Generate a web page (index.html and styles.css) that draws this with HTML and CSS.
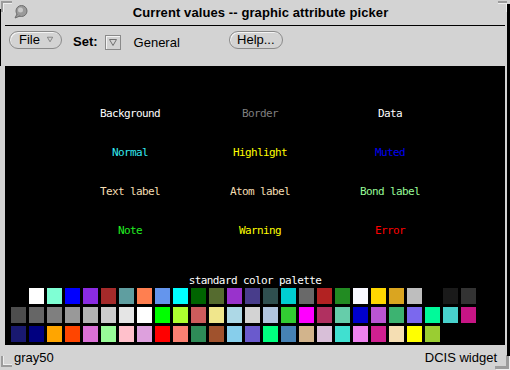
FILE: index.html
```html
<!DOCTYPE html>
<html lang="en">
<head>
  <meta charset="UTF-8">
  <title>Current values -- graphic attribute picker</title>
  <link rel="stylesheet" href="styles.css">
</head>
<body>
  <div class="window">
    <span class="corner corner-tl"></span>
    <span class="corner corner-tr"></span>
    <span class="corner corner-bl"></span>
    <span class="corner corner-br"></span>
    <span class="edge-left"></span>
    <span class="edge-right"></span>

    <div class="titlebar">
      <svg class="title-icon" width="14" height="14" viewBox="0 0 14 14">
        <circle cx="7.5" cy="6" r="5.5" fill="#9a9a9a" stroke="#6e6e6e"/>
        <circle cx="6.5" cy="5" r="2.5" fill="#c8c8c8"/>
        <path d="M3 9 L1 13 L6 11" fill="#9a9a9a" stroke="#6e6e6e"/>
      </svg>
      <h1 class="title">Current values -- graphic attribute picker</h1>
    </div>

    <div class="toolbar">
      <button type="button" class="pill file-btn">File
        <svg class="tri" width="8" height="7" viewBox="0 0 8 7"><path d="M0.5 0.5 H7.5 L4 6.5 Z" fill="none" stroke="#707070"/></svg>
      </button>
      <span class="set-label">Set:</span>
      <span class="menu-box">
        <svg class="tri" width="8" height="7" viewBox="0 0 8 7"><path d="M0.5 0.5 H7.5 L4 6.5 Z" fill="none" stroke="#707070"/></svg>
      </span>
      <span class="set-value">General</span>
      <button type="button" class="pill help-btn">Help...</button>
    </div>

    <div class="canvas">
      <div class="labels">
        <span class="c-white">Background</span>
        <span class="c-gray">Border</span>
        <span class="c-white">Data</span>
        <span class="c-cyan">Normal</span>
        <span class="c-yellow">Highlight</span>
        <span class="c-blue">Muted</span>
        <span class="c-wheat">Text label</span>
        <span class="c-wheat">Atom label</span>
        <span class="c-palegreen">Bond label</span>
        <span class="c-green">Note</span>
        <span class="c-yellow">Warning</span>
        <span class="c-red">Error</span>
      </div>
      <div class="palette-title">standard color palette</div>
      <div class="palette" id="palette"></div>
    </div>

    <div class="statusbar">
      <span>gray50</span>
      <span>DCIS widget</span>
    </div>
  </div>

<script>
const palette = [
  '#000000', '#ffffff', '#7fffd4', '#0000ff', '#8a2be2', '#a52a2a', '#5f9ea0', '#ff7f50', '#6495ed',
  '#00ffff', '#006400', '#556b2f', '#9932cc', '#483d8b', '#2f4f4f', '#00ced1', '#696969', '#b22222',
  '#228b22', '#f8f8ff', '#ffd700', '#daa520', '#bebebe', '#000000', '#1a1a1a', '#333333',

  '#4d4d4d', '#666666', '#7f7f7f', '#999999', '#b3b3b3', '#cccccc', '#e5e5e5', '#ffffff', '#00ff00',
  '#adff2f', '#cd5c5c', '#f0e68c', '#add8e6', '#d3d3d3', '#b0c4de', '#32cd32', '#ff00ff', '#b03060',
  '#66cdaa', '#0000cd', '#ba55d3', '#3cb371', '#7b68ee', '#00fa9a', '#48d1cc', '#c71585',

  '#191970', '#000080', '#ffa500', '#ff4500', '#da70d6', '#98fb98', '#ffc0cb', '#dda0dd', '#ff0000',
  '#fa8072', '#2e8b57', '#a0522d', '#87ceeb', '#6a5acd', '#00ff7f', '#4682b4', '#d2b48c', '#d8bfd8',
  '#40e0d0', '#ee82ee', '#d02090', '#f5deb3', '#ffff00', '#9acd32', '#000000', '#000000'
];

const grid = document.getElementById('palette');
palette.forEach(function(color) {
  const cell = document.createElement('span');
  cell.className = 'swatch';
  cell.style.background = color;
  grid.appendChild(cell);
});
</script>
</body>
</html>
```

FILE: styles.css
```css
body {
  margin: 0;
  background: #d3d3d3;
}

.window {
  position: relative;
  width: 510px;
  height: 370px;
  background: #d3d3d3;
  display: flex;
  flex-direction: column;
  font-family: "Liberation Sans", Arial, sans-serif;
  color: #000;
}

/* frame decoration */
.edge-left {
  position: absolute;
  left: 0;
  top: 9px;
  width: 1px;
  height: 57px;
  background: #000;
}
.edge-right {
  position: absolute;
  left: 507px;
  top: 4px;
  width: 3px;
  height: 352px;
  background: #000;
}

.corner {
  position: absolute;
  width: 9px;
  height: 9px;
}
.corner-tl {
  left: 1px;
  top: 1px;
  border-top: 2px solid #9c9c9c;
  border-left: 2px solid #9c9c9c;
  box-shadow: inset 1px 1px 0 #eeeeee;
}
.corner-tr {
  right: 3px;
  top: 1px;
  border-top: 2px solid #9c9c9c;
  box-shadow: inset -1px 1px 0 #eeeeee;
}
.corner-bl {
  left: 1px;
  bottom: 3px;
  border-left: 2px solid #9c9c9c;
  border-bottom: 2px solid #9c9c9c;
  box-shadow: inset 1px -1px 0 #eeeeee;
}
.corner-br {
  right: 1px;
  bottom: 1px;
  width: 11px;
  height: 11px;
  border-right: 3px solid #9c9c9c;
  border-bottom: 3px solid #9c9c9c;
  box-shadow: 1px 1px 0 #eeeeee;
}

/* title */
.titlebar {
  height: 25px;
  margin: 0 5px;
  border-bottom: 1px solid #000;
  display: flex;
  align-items: center;
  padding-left: 9px;
}
.title-icon {
  display: block;
  margin-top: -1px;
}
.title {
  flex: 1;
  margin: 0;
  padding-right: 12px;
  font-size: 13px;
  font-weight: bold;
  text-align: center;
  letter-spacing: 0.1px;
}

/* control row */
.toolbar {
  height: 40px;
  box-sizing: border-box;
  padding: 5px 0 0 9px;
  display: flex;
  align-items: flex-start;
  font-size: 13px;
}
.pill {
  height: 18px;
  box-sizing: border-box;
  border: 1px solid #8a8a8a;
  border-radius: 9px;
  background: #d3d3d3;
  box-shadow: inset 1px 1px 0 #f4f4f4;
  font-family: inherit;
  font-size: 13px;
  line-height: 14px;
  color: #000;
  display: flex;
  align-items: center;
  padding: 0 8px 1px 9px;
  margin: 0;
}
.file-btn {
  width: 53px;
  gap: 7px;
}
.help-btn {
  width: 54px;
  margin-left: 49px;
  justify-content: center;
  padding: 0 0 1px;
}
.tri {
  display: block;
}
.set-label {
  font-weight: bold;
  margin: 3px 0 0 11px;
  line-height: 16px;
}
.menu-box {
  width: 16px;
  height: 15px;
  box-sizing: border-box;
  margin: 4px 0 0 7px;
  border: 1px solid #8a8a8a;
  box-shadow: inset 1px 1px 0 #f4f4f4;
  display: flex;
  align-items: center;
  justify-content: center;
}
.set-value {
  margin: 4px 0 0 13px;
  line-height: 16px;
}

/* black drawing area */
.canvas {
  margin: 0 5px;
  height: 279px;
  background: #000;
  font-family: "DejaVu Sans Mono", "Liberation Mono", monospace;
  font-size: 11px;
  letter-spacing: -0.6px;
}
.labels {
  display: grid;
  grid-template-columns: repeat(3, 130px);
  grid-auto-rows: 39px;
  padding: 28px 0 0 60px;
  height: 156px;
}
.labels span {
  text-align: center;
  line-height: 39px;
  height: 39px;
}
.c-white { color: #ffffff; }
.c-gray { color: #7f7f7f; }
.c-cyan { color: #33e8f0; }
.c-yellow { color: #ffff00; }
.c-blue { color: #0000f0; }
.c-wheat { color: #f5deb3; }
.c-palegreen { color: #98fb98; }
.c-green { color: #22ee22; }
.c-red { color: #ff0000; }

.palette-title {
  margin-top: 24px;
  height: 14px;
  line-height: 14px;
  text-align: center;
  color: #fff;
}
.palette {
  display: grid;
  grid-template-columns: repeat(26, 15px);
  grid-auto-rows: 16px;
  gap: 3px;
  padding: 0 0 0 6px;
}
.swatch {
  display: block;
}

/* bottom message line */
.statusbar {
  flex: 1;
  display: flex;
  justify-content: space-between;
  align-items: center;
  padding: 0 13px 0 14px;
  font-size: 13px;
}
```
